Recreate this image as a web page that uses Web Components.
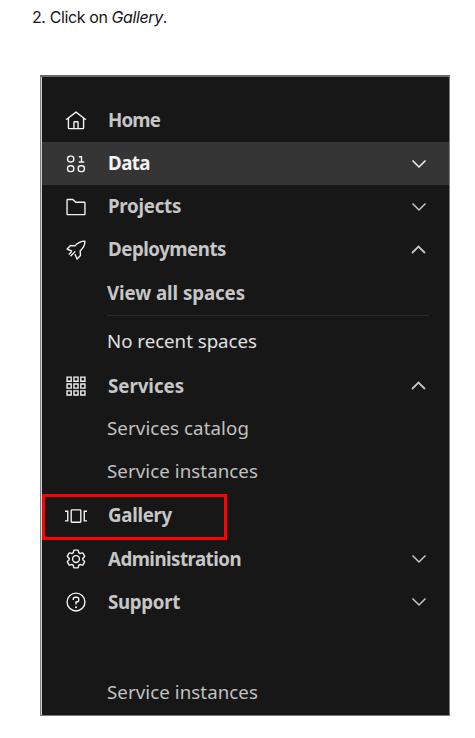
<!DOCTYPE html>
<html lang="en"><head><meta charset="utf-8"><title>Gallery</title>
<style>html,body{margin:0;background:#fff}</style></head><body>
<doc-page></doc-page>
<script>
const ICONS={
home:'<path d="M16.6 2.2a1 1 0 0 0-1.2 0L1 13.4 2.2 15 4 13.6V26a2 2 0 0 0 2 2h20a2 2 0 0 0 2-2V13.6l1.8 1.4 1.2-1.6zM18 26h-4v-8h4zm2 0v-8a2 2 0 0 0-2-2h-4a2 2 0 0 0-2 2v8H6V12.1l10-7.8 10 7.8V26z"/>',
data:'<g fill="none" stroke="currentColor" stroke-width="2"><rect x="3.8" y="4.5" width="9" height="8.5" rx="3.8"/><rect x="3.8" y="18.5" width="9" height="8.5" rx="3.8"/><rect x="19.2" y="18.5" width="9" height="8.5" rx="3.8"/><path d="M20 5.5h4v7.5M20 13h8"/></g>',
folder:'<path d="M11.17 6l3.42 3.41.58.59H28v16H4V6h7.17m0-2H4a2 2 0 0 0-2 2v20a2 2 0 0 0 2 2h24a2 2 0 0 0 2-2V10a2 2 0 0 0-2-2H16l-3.41-3.41A2 2 0 0 0 11.17 4z"/>',
rocket:'<g fill="none" stroke="currentColor" stroke-width="2" stroke-linejoin="round"><path d="M10 17.500L3 14.500 8 9.500 14.500 10C18 6 22 3 29 3 29 10 26 14 22 17.500L22.500 24 17.500 29l-3-7M3.500 15l7 2.500M5.500 22.500l4-4M8 25l7-7"/></g>',
grid:'<g fill="none" stroke="currentColor" stroke-width="2"><path d="M3 3h6v6H3zM13 3h6v6h-6zM23 3h6v6h-6zM3 13h6v6H3zM13 13h6v6h-6zM23 13h6v6h-6zM3 23h6v6H3zM13 23h6v6h-6zM23 23h6v6h-6z"/></g>',
gallery:'<g fill="none" stroke="currentColor" stroke-width="2"><rect x="9" y="7" width="14" height="18" rx="1"/><path d="M0 9h4v14H0M32 9h-4v14h4"/></g>',
gear:'<path d="M27 16.76V15.24l1.92-1.68a2 2 0 0 0 .41-2.5l-2.36-4a2 2 0 0 0-1.73-1 2 2 0 0 0-.64.1l-2.43.82a11.35 11.35 0 0 0-1.31-.75l-.51-2.52a2 2 0 0 0-2-1.61h-4.68a2 2 0 0 0-2 1.61l-.51 2.52a11.48 11.48 0 0 0-1.32.75L7.4 6.16a2 2 0 0 0-.64-.1 2 2 0 0 0-1.73 1l-2.36 4a2 2 0 0 0 .41 2.5L5 15.24v1.52l-1.92 1.68a2 2 0 0 0-.41 2.5l2.36 4a2 2 0 0 0 1.73 1 2 2 0 0 0 .64-.1l2.43-.82a11.35 11.35 0 0 0 1.31.75l.51 2.52a2 2 0 0 0 2 1.61h4.72a2 2 0 0 0 2-1.61l.51-2.52a11.48 11.48 0 0 0 1.32-.75l2.42.82a2 2 0 0 0 .64.1 2 2 0 0 0 1.73-1l2.28-4a2 2 0 0 0-.41-2.5zM25.21 24l-3.43-1.16a8.86 8.86 0 0 1-2.71 1.57L18.36 28h-4.72l-.71-3.55a9.36 9.36 0 0 1-2.7-1.57L6.79 24l-2.36-4 2.72-2.4a8.9 8.9 0 0 1 0-3.13L4.43 12l2.36-4 3.43 1.16a8.86 8.86 0 0 1 2.71-1.57L13.64 4h4.72l.71 3.55a9.36 9.36 0 0 1 2.7 1.57L25.21 8l2.36 4-2.72 2.4a8.9 8.9 0 0 1 0 3.13L27.57 20z"/><path d="M16 22a6 6 0 1 1 0-12 6 6 0 0 1 0 12zm0-10a4 4 0 1 0 0 8 4 4 0 0 0 0-8z"/>',
help:'<g fill="none" stroke="currentColor" stroke-width="2"><circle cx="16" cy="16" r="13"/><path d="M12 13v-1a3 3 0 0 1 3-3h2a3 3 0 0 1 3 3v1a3 3 0 0 1-3 3h-1v3.5"/></g><circle cx="16" cy="23.5" r="1.5"/>'};

// A line of text whose tracking is adjusted to span the given width.
class FitText extends HTMLElement{
 connectedCallback(){
  const r=this.attachShadow({mode:'open'});
  r.innerHTML='<style>:host{display:block;white-space:nowrap}span{display:inline-block}</style><span><slot></slot></span>';
  const s=r.querySelector('span'),n=this.textContent.length;
  s.style.letterSpacing=((+this.getAttribute('width')-s.getBoundingClientRect().width)/n)+'px';
 }}
customElements.define('fit-text',FitText);

class NavIcon extends HTMLElement{
 connectedCallback(){
  this.attachShadow({mode:'open'}).innerHTML=`<style>:host{display:block;width:22px;height:22px;color:#f4f4f4}svg{display:block}</style><svg width="22" height="22" viewBox="0 0 32 32" fill="currentColor">${ICONS[this.getAttribute('name')]}</svg>`;
 }}
customElements.define('nav-icon',NavIcon);

class NavItem extends HTMLElement{
 connectedCallback(){
  const a=k=>this.getAttribute(k),c=a('chevron');
  this.attachShadow({mode:'open'}).innerHTML=`<style>
  :host{display:grid;grid-template-columns:22px 1fr 16px;column-gap:21px;align-items:center;height:43px;padding:0 22px 0 23px;box-sizing:border-box;position:relative;color:#c6c6c6;font-weight:700}
  :host([active]){background:#353535;color:#f4f4f4}
  fit-text{line-height:26px;padding-bottom:1px}
  nav-icon{margin-top:1px}
  svg{display:block;margin-top:1px}
  :host([raised]) nav-icon,:host([raised]) svg{margin-top:-1px}
  :host([marked])::after{content:"";position:absolute;left:0;top:0;width:185px;height:46px;box-sizing:border-box;border:3px solid #f00}
  </style><nav-icon name="${a('icon')}"></nav-icon><fit-text width="${a('width')}">${a('label')}</fit-text>
  ${c?`<svg width="16" height="10" viewBox="0 0 16 10" fill="none" stroke="currentColor" stroke-width="${c=='up'?1.8:1.5}"><path d="${c=='down'?'M1.5 1.5L8 8l6.5-6.5':'M1 8L7.500 1.500 14 8'}"/></svg>`:''}`;
 }}
customElements.define('nav-item',NavItem);

class NavLink extends HTMLElement{
 connectedCallback(){
  const a=k=>this.getAttribute(k);
  this.attachShadow({mode:'open'}).innerHTML=`<style>
  :host{display:flex;align-items:center;height:43px;margin:0 20px 0 65px;padding-bottom:3px;color:#c1c1c1;box-sizing:border-box}
  :host([strong]){height:45px;padding:0;font-weight:700;border-bottom:1px solid #2b2b2b;color:#c6c6c6}
  :host([note]){height:49px;padding:0;color:#e0e0e0}
  </style><fit-text width="${a('width')}">${a('label')}</fit-text>`;
 }}
customElements.define('nav-link',NavLink);

class SidePanel extends HTMLElement{
 connectedCallback(){
  this.attachShadow({mode:'open'}).innerHTML=`<style>
  :host{display:flex;flex-direction:column;width:410px;height:641px;box-sizing:border-box;border:1px solid #7d7d7d;border-top:2px solid #666a69;box-shadow:inset 1px 0 #c9d3df;padding:22px 0 0 1px;background:#171717;font:18.7px/26px "Noto Sans",sans-serif}
  </style><slot></slot>`;
 }}
customElements.define('side-panel',SidePanel);

class DocPage extends HTMLElement{
 connectedCallback(){
  this.attachShadow({mode:'open'}).innerHTML=`<style>
  :host{display:flex;flex-direction:column;width:475px;height:738px;overflow:hidden;background:#fff}
  header{height:75px;box-sizing:border-box;padding:5px 0 0 32px;font:16px/24px Inter,sans-serif;color:#161616}
  side-panel{margin-left:40px}
  .gap{height:1px}.tail{height:48px}
  </style>
  <header><fit-text width="135">2. Click on <em>Gallery</em>.</fit-text></header>
  <side-panel>
  <nav-item icon="home" label="Home" width="52"></nav-item>
  <nav-item icon="data" label="Data" width="42" chevron="down" active></nav-item>
  <nav-item icon="folder" label="Projects" width="73" chevron="down"></nav-item>
  <nav-item icon="rocket" label="Deployments" width="118" chevron="up"></nav-item>
  <nav-link label="View all spaces" width="138" strong></nav-link>
  <nav-link label="No recent spaces" width="150" note></nav-link>
  <nav-item icon="grid" label="Services" width="76" chevron="up" raised></nav-item>
  <nav-link label="Services catalog" width="142"></nav-link>
  <nav-link label="Service instances" width="151"></nav-link>
  <nav-item icon="gallery" label="Gallery" width="64" marked></nav-item>
  <div class="gap"></div>
  <nav-item icon="gear" label="Administration" width="133" chevron="down" raised></nav-item>
  <nav-item icon="help" label="Support" width="72" chevron="down" raised></nav-item>
  <div class="tail"></div>
  <nav-link label="Service instances" width="151"></nav-link>
  </side-panel>`;
 }}
customElements.define('doc-page',DocPage);
</script></body></html>
